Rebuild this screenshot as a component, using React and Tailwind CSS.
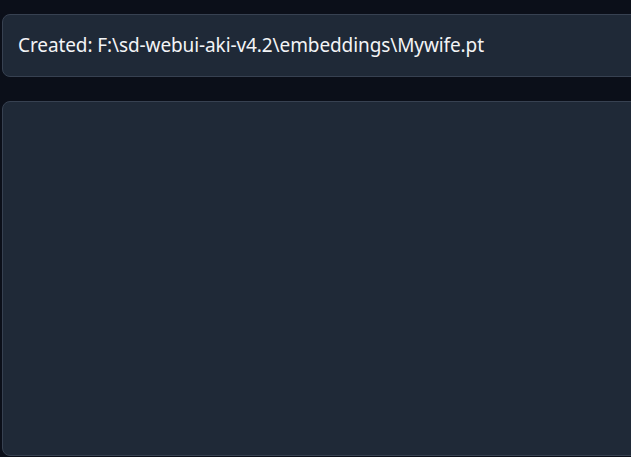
const App = () => {
  return (
    <div className="w-[631px] h-[457px] overflow-hidden bg-[#0b0f19] font-['Noto_Sans',sans-serif]">
      <div className="flex flex-col gap-[24px] pl-[2px] pt-[14px] w-[680px]">
        {/* status box */}
        <div className="h-[63px] rounded-lg border border-[#374151] bg-[#1f2937] flex items-center px-[15px]">
          <span className="text-[19px] text-[#f3f4f6] tracking-[-0.1px]">
            Created: F:\sd-webui-aki-v4.2\embeddings\Mywife.pt
          </span>
        </div>

        {/* empty panel */}
        <div className="h-[355px] rounded-lg border border-[#374151] bg-[#1f2937]" />
      </div>
    </div>
  );
};

export default App;
